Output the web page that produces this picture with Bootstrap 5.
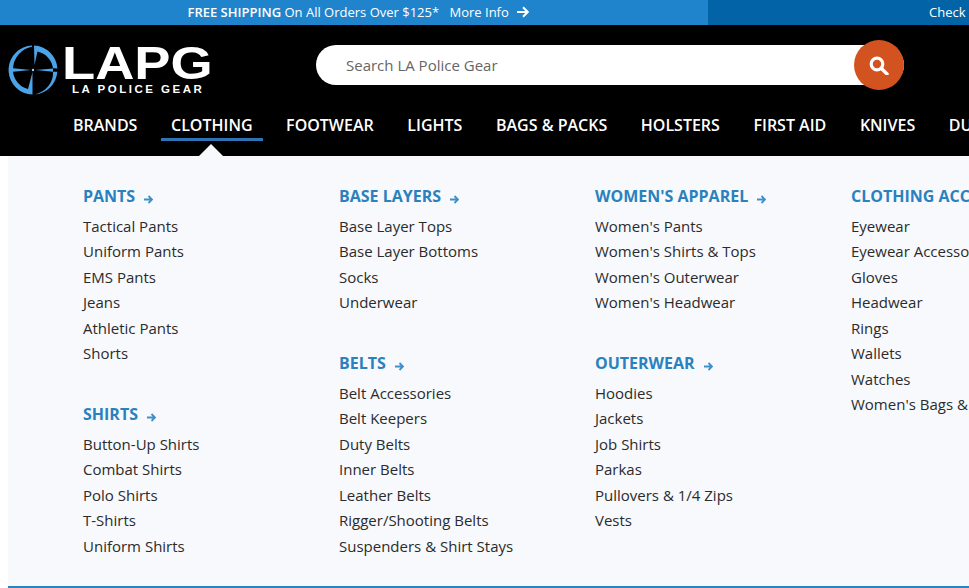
<!DOCTYPE html>
<html lang="en"><head><meta charset="utf-8"><title>LAPG</title>
<link href="https://cdn.jsdelivr.net/npm/bootstrap@5.3.0/dist/css/bootstrap.min.css" rel="stylesheet">
<style>
html,body{height:588px;overflow:hidden;background:#fff}
body{font-family:"Open Sans",sans-serif;color:#222;width:969px}
a{text-decoration:none;color:inherit}
.promo{height:25px;background:#1f84cb;color:#fff;font-size:13px;line-height:25px}
.promo-main{flex:none;width:708px;padding-left:187.5px;white-space:nowrap}
.promo-main strong{font-weight:600}
.promo-side{flex:1 1 0;min-width:0;background:#0263a6;padding-left:221px;white-space:nowrap;overflow:hidden}
.promo-more{margin-left:7px}
.promo-arrow{margin-left:5px;vertical-align:-1px}
.masthead{height:131px;background:#000;position:relative}
.toprow{height:85px}
.brand{flex:none;width:316px;padding-left:8px;padding-top:20px}
.brand-mark{flex:none}
.brand-words{margin-left:6px;color:#fff;width:146px}
.brand-big{font-family:"Liberation Sans",sans-serif;font-weight:700;font-size:46px;line-height:36px;height:36px;display:block;transform:scaleX(1.18);transform-origin:left;margin-left:-2px;white-space:nowrap}
.brand-small{font-family:"Liberation Sans",sans-serif;font-weight:700;font-size:11.5px;line-height:12px;letter-spacing:2.5px;display:block;margin-left:8px;white-space:nowrap;margin-top:2px}
.searchbox{flex:none;width:588px;height:50px;margin-top:15px;position:relative}
.searchfield{position:absolute;left:0;right:0;top:5px;height:40px;border-radius:20px;background:#fff;color:#666;font-size:15px;line-height:40px;padding-left:30px}
.searchbtn{position:absolute;right:0;top:0;width:50px;height:50px;border-radius:50%;background:#d2531f;border:0;padding:0}
.mainnav{white-space:nowrap;padding-left:63px;gap:13.6px;position:absolute;top:85px;left:0;width:969px;overflow:hidden}
.mainnav a{display:block;color:#fff;font-size:16px;font-weight:600;line-height:22px;padding:4px 10px 0;height:31px;text-transform:uppercase}
.mainnav a.current{border-bottom:3px solid #2e74b5}
.caret-up{position:absolute;left:199px;bottom:0;width:0;height:0;border-left:12px solid transparent;border-right:12px solid transparent;border-bottom:12px solid #f7f9fd}
.megamenu{height:432px;margin-left:8px;background:#f7f9fd;border-bottom:2px solid #2a84c0;padding:29px 0 0 75px;overflow:hidden}
.menu-col{flex:none;width:256px;white-space:nowrap}
.menu-group{margin-bottom:36.5px}
.menu-title{display:block;color:#2a81bd;font-size:16px;font-weight:700;line-height:22px;text-transform:uppercase;margin-bottom:6.5px}
.menu-title svg{margin-left:9px;vertical-align:-2px}
.menu-link{display:block;font-size:15px;line-height:25.5px;height:25.5px;color:#2b2b2b}
</style></head>
<body>
<div class="promo d-flex">
  <div class="promo-main"><strong>FREE SHIPPING</strong> On All Orders Over $125* <a href="#" class="promo-more">More Info <svg class="promo-arrow" width="12" height="12" viewBox="0 0 12 12" fill="none" stroke="#fff" stroke-width="2"><path d="M0 6H10.5M6 1.2L10.8 6L6 10.8"/></svg></a></div>
  <div class="promo-side">Check Order Status</div>
</div>
<header class="masthead">
  <div class="toprow d-flex">
    <a href="#" class="brand d-flex">
      <svg class="brand-mark" width="50" height="50" viewBox="0 0 50 50" fill="#4ba3e8">
        <path d="M0.6 23.5A24.5 24.5 0 0 1 24 .6V1.8A23 23 0 0 0 5 23.3L23 25L5 26.8A20 20 0 0 0 20 44L24.5 27L24.5 49.5A24.5 24.5 0 0 1 .6 26.5Z"/>
        <path d="M26 .6A24.5 24.5 0 0 1 49.4 23.5L45 23.3A20 20 0 0 0 29.5 6.5L26.5 20Z"/>
        <path d="M27.5 25L45 23.5L45 26.8Z"/>
        <path d="M49.3 26.8A24.5 24.5 0 0 1 27 49.4A24 22 0 0 0 45 26.8Z"/>
        <circle cx="25" cy="25" r="1.2" fill="#9fcdf0"/>
      </svg>
      <span class="brand-words"><span class="brand-big">LAPG</span><span class="brand-small">LA POLICE GEAR</span></span>
    </a>
    <div class="searchbox">
      <div class="searchfield">Search LA Police Gear</div>
      <button class="searchbtn d-flex align-items-center justify-content-center" type="button" aria-label="Search">
        <svg width="20" height="20" viewBox="0 0 20 20" fill="none" stroke="#fff"><circle cx="8" cy="9" r="5.8" stroke-width="3.2"/><path d="M12.5 13.5L18 19" stroke-width="3.4" stroke-linecap="round"/></svg>
      </button>
    </div>
  </div>
  <nav class="mainnav d-flex">
    <a href="#">Brands</a><a href="#" class="current">Clothing</a><a href="#">Footwear</a><a href="#">Lights</a><a href="#">Bags &amp; Packs</a><a href="#">Holsters</a><a href="#">First Aid</a><a href="#">Knives</a><a href="#">Duty Gear</a>
  </nav>
  <span class="caret-up"></span>
</header>
<section class="megamenu d-flex">
  <div class="menu-col">
    <div class="menu-group"><a href="#" class="menu-title">Pants<svg width="9" height="9" viewBox="0 0 9 9" fill="none" stroke="#3f90c6" stroke-width="1.8"><path d="M0 4.5H8M4.5 1L8 4.5L4.5 8"/></svg></a>
      <a href="#" class="menu-link">Tactical Pants</a><a href="#" class="menu-link">Uniform Pants</a><a href="#" class="menu-link">EMS Pants</a><a href="#" class="menu-link">Jeans</a><a href="#" class="menu-link">Athletic Pants</a><a href="#" class="menu-link">Shorts</a></div>
    <div class="menu-group"><a href="#" class="menu-title">Shirts<svg width="9" height="9" viewBox="0 0 9 9" fill="none" stroke="#3f90c6" stroke-width="1.8"><path d="M0 4.5H8M4.5 1L8 4.5L4.5 8"/></svg></a>
      <a href="#" class="menu-link">Button-Up Shirts</a><a href="#" class="menu-link">Combat Shirts</a><a href="#" class="menu-link">Polo Shirts</a><a href="#" class="menu-link">T-Shirts</a><a href="#" class="menu-link">Uniform Shirts</a></div>
  </div>
  <div class="menu-col">
    <div class="menu-group"><a href="#" class="menu-title">Base Layers<svg width="9" height="9" viewBox="0 0 9 9" fill="none" stroke="#3f90c6" stroke-width="1.8"><path d="M0 4.5H8M4.5 1L8 4.5L4.5 8"/></svg></a>
      <a href="#" class="menu-link">Base Layer Tops</a><a href="#" class="menu-link">Base Layer Bottoms</a><a href="#" class="menu-link">Socks</a><a href="#" class="menu-link">Underwear</a></div>
    <div class="menu-group"><a href="#" class="menu-title">Belts<svg width="9" height="9" viewBox="0 0 9 9" fill="none" stroke="#3f90c6" stroke-width="1.8"><path d="M0 4.5H8M4.5 1L8 4.5L4.5 8"/></svg></a>
      <a href="#" class="menu-link">Belt Accessories</a><a href="#" class="menu-link">Belt Keepers</a><a href="#" class="menu-link">Duty Belts</a><a href="#" class="menu-link">Inner Belts</a><a href="#" class="menu-link">Leather Belts</a><a href="#" class="menu-link">Rigger/Shooting Belts</a><a href="#" class="menu-link">Suspenders &amp; Shirt Stays</a></div>
  </div>
  <div class="menu-col">
    <div class="menu-group"><a href="#" class="menu-title">Women's Apparel<svg width="9" height="9" viewBox="0 0 9 9" fill="none" stroke="#3f90c6" stroke-width="1.8"><path d="M0 4.5H8M4.5 1L8 4.5L4.5 8"/></svg></a>
      <a href="#" class="menu-link">Women's Pants</a><a href="#" class="menu-link">Women's Shirts &amp; Tops</a><a href="#" class="menu-link">Women's Outerwear</a><a href="#" class="menu-link">Women's Headwear</a></div>
    <div class="menu-group"><a href="#" class="menu-title">Outerwear<svg width="9" height="9" viewBox="0 0 9 9" fill="none" stroke="#3f90c6" stroke-width="1.8"><path d="M0 4.5H8M4.5 1L8 4.5L4.5 8"/></svg></a>
      <a href="#" class="menu-link">Hoodies</a><a href="#" class="menu-link">Jackets</a><a href="#" class="menu-link">Job Shirts</a><a href="#" class="menu-link">Parkas</a><a href="#" class="menu-link">Pullovers &amp; 1/4 Zips</a><a href="#" class="menu-link">Vests</a></div>
  </div>
  <div class="menu-col">
    <div class="menu-group"><a href="#" class="menu-title">Clothing Accessories</a>
      <a href="#" class="menu-link">Eyewear</a><a href="#" class="menu-link">Eyewear Accessories</a><a href="#" class="menu-link">Gloves</a><a href="#" class="menu-link">Headwear</a><a href="#" class="menu-link">Rings</a><a href="#" class="menu-link">Wallets</a><a href="#" class="menu-link">Watches</a><a href="#" class="menu-link">Women's Bags &amp; Purses</a></div>
  </div>
</section>
<script src="https://cdn.jsdelivr.net/npm/bootstrap@5.3.0/dist/js/bootstrap.bundle.min.js"></script>
</body></html>
